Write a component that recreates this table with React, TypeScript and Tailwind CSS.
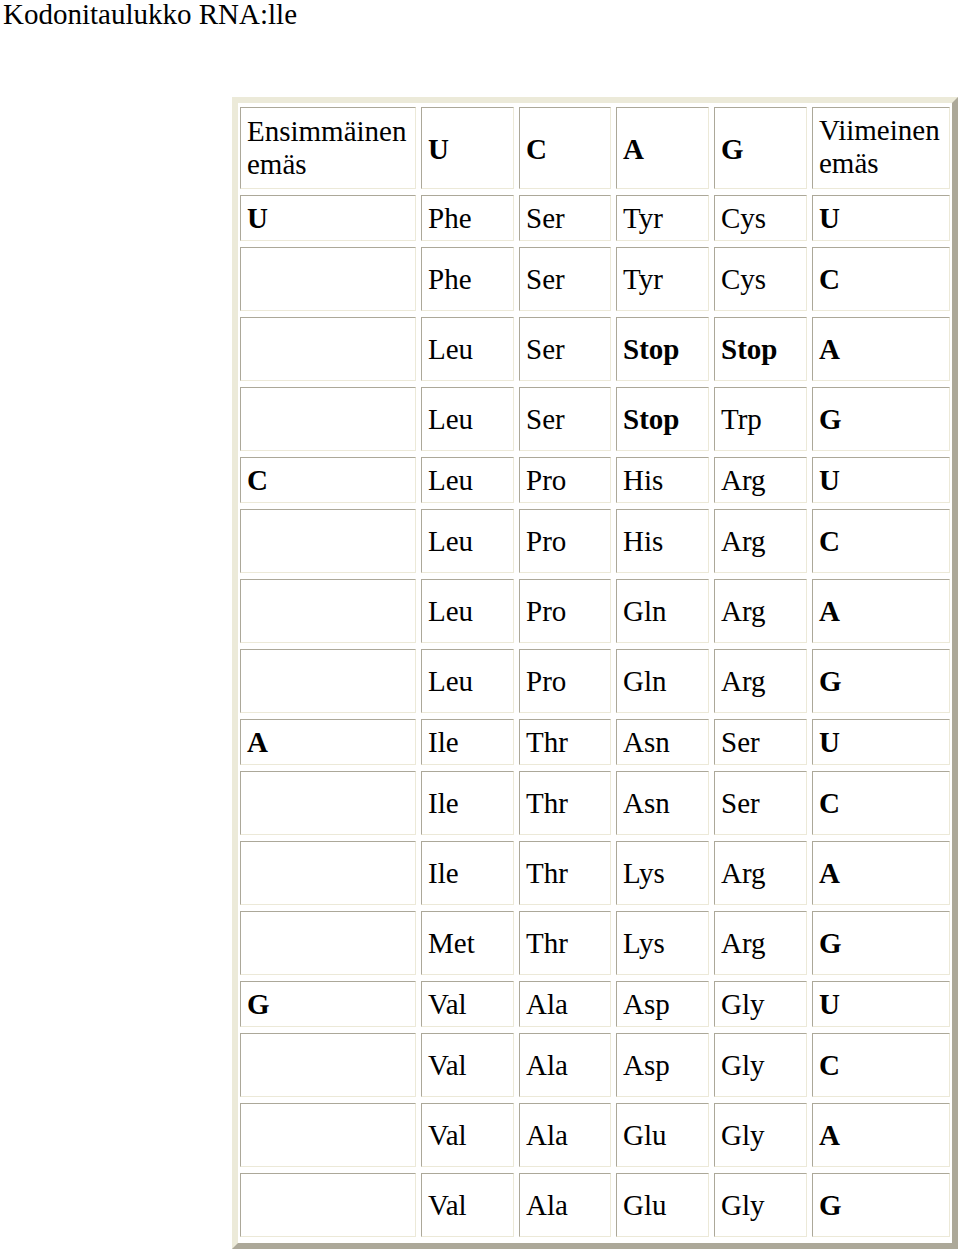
import React from "react";

const groups = [
  {
    base: "U",
    rows: [
      ["Phe", "Ser", "Tyr", "Cys", "U"],
      ["Phe", "Ser", "Tyr", "Cys", "C"],
      ["Leu", "Ser", "Stop", "Stop", "A"],
      ["Leu", "Ser", "Stop", "Trp", "G"],
    ],
  },
  {
    base: "C",
    rows: [
      ["Leu", "Pro", "His", "Arg", "U"],
      ["Leu", "Pro", "His", "Arg", "C"],
      ["Leu", "Pro", "Gln", "Arg", "A"],
      ["Leu", "Pro", "Gln", "Arg", "G"],
    ],
  },
  {
    base: "A",
    rows: [
      ["Ile", "Thr", "Asn", "Ser", "U"],
      ["Ile", "Thr", "Asn", "Ser", "C"],
      ["Ile", "Thr", "Lys", "Arg", "A"],
      ["Met", "Thr", "Lys", "Arg", "G"],
    ],
  },
  {
    base: "G",
    rows: [
      ["Val", "Ala", "Asp", "Gly", "U"],
      ["Val", "Ala", "Asp", "Gly", "C"],
      ["Val", "Ala", "Glu", "Gly", "A"],
      ["Val", "Ala", "Glu", "Gly", "G"],
    ],
  },
];

const Cell = ({
  children,
  bold,
  tall,
}: {
  children?: React.ReactNode;
  bold?: boolean;
  tall?: boolean;
}) => (
  <div
    className={`flex items-center bg-white pl-[6px] border border-t-[#aca899] border-l-[#aca899] border-b-[#ece9d8] border-r-[#ece9d8] whitespace-nowrap ${
      tall ? "h-[64px]" : "h-[46px]"
    } ${bold ? "font-bold" : ""}`}
  >
    {children}
  </div>
);

export default function App() {
  return (
    <div className="min-h-screen bg-white text-black text-[29px] leading-[33px] font-['Liberation_Serif','Times_New_Roman',serif]">
      <div className="pl-[3px] leading-[29px] font-['Liberation_Serif','Times_New_Roman',serif]">
        Kodonitaulukko RNA:lle
      </div>

      <div className="ml-[232px] mt-[68px] w-[726px] border-[6px] border-t-[#ecead9] border-l-[#ecead9] border-b-[#aca899] border-r-[#aca899] bg-white pt-[4px] pb-[6px] px-[2px]">
        <div className="grid grid-cols-[176px_93px_92px_93px_93px_138px] gap-x-[5px] gap-y-[6px]">
          {/* header */}
          <div className="flex h-[82px] items-center bg-white pl-[6px] border border-t-[#aca899] border-l-[#aca899] border-b-[#ece9d8] border-r-[#ece9d8] whitespace-nowrap">
            <span>
              Ensimmäinen
              <br />
              emäs
            </span>
          </div>
          {["U", "C", "A", "G"].map((b) => (
            <div
              key={b}
              className="flex h-[82px] items-center bg-white pl-[6px] pt-[2px] font-bold border border-t-[#aca899] border-l-[#aca899] border-b-[#ece9d8] border-r-[#ece9d8]"
            >
              {b}
            </div>
          ))}
          <div className="flex h-[82px] items-center bg-white pl-[6px] pb-[2px] border border-t-[#aca899] border-l-[#aca899] border-b-[#ece9d8] border-r-[#ece9d8] whitespace-nowrap">
            <span>
              Viimeinen
              <br />
              emäs
            </span>
          </div>

          {groups.map((g) =>
            g.rows.map((r, i) => (
              <React.Fragment key={g.base + i}>
                <Cell bold tall={i > 0}>
                  {i === 0 ? g.base : ""}
                </Cell>
                {r.slice(0, 4).map((aa, j) => (
                  <Cell key={j} tall={i > 0} bold={aa === "Stop"}>
                    {aa}
                  </Cell>
                ))}
                <Cell bold tall={i > 0}>
                  {r[4]}
                </Cell>
              </React.Fragment>
            ))
          )}
        </div>
      </div>
    </div>
  );
}
